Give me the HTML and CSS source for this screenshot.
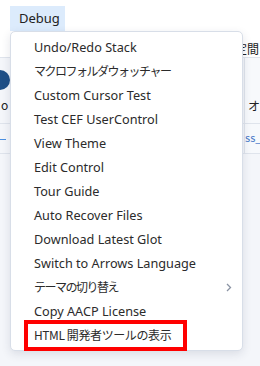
FILE: index.html
```html
<!doctype html>
<html lang="ja">
<head>
  <meta charset="UTF-8">
  <meta name="viewport" content="width=device-width, initial-scale=1.0">
  <title>Debug menu</title>
  <link rel="stylesheet" href="styles.css">
</head>
<body>

<div class="menubar">
  <div class="menubar-tab">Debug</div>
</div>

<div class="sheet">
  <div class="sheet-head">
    <span class="head-label">設定間</span>
  </div>
  <div class="sheet-row tall">
    <div class="cell-left">
      <span class="avatar"></span>
      <span class="avatar-chevron">›</span>
      <span class="cell-name">o</span>
    </div>
    <div class="cell-right">
      <span class="cell-kana">オ</span>
    </div>
  </div>
  <div class="sheet-row">
    <div class="cell-left">
      <span class="cell-dash"></span>
    </div>
    <div class="cell-right">
      <span class="cell-link">ss_</span>
    </div>
  </div>
  <div class="sheet-rest"></div>
</div>

<div class="dropdown">
  <ul class="dropdown-list">
    <li class="dropdown-item">Undo/Redo Stack</li>
    <li class="dropdown-item jp kana">マクロフォルダウォッチャー</li>
    <li class="dropdown-item">Custom Cursor Test</li>
    <li class="dropdown-item">Test CEF UserControl</li>
    <li class="dropdown-item">View Theme</li>
    <li class="dropdown-item">Edit Control</li>
    <li class="dropdown-item">Tour Guide</li>
    <li class="dropdown-item">Auto Recover Files</li>
    <li class="dropdown-item">Download Latest Glot</li>
    <li class="dropdown-item">Switch to Arrows Language</li>
    <li class="dropdown-item jp kana has-sub">
      テーマの切り替え
      <svg class="sub-arrow" width="6" height="9" viewBox="0 0 6 9">
        <path d="M1 1 L4.5 4.5 L1 8" fill="none" stroke="#8a93a3" stroke-width="1.3"/>
      </svg>
    </li>
    <li class="dropdown-item">Copy AACP License</li>
    <li class="dropdown-item jp tight">HTML 開発者ツールの表示</li>
  </ul>
</div>

<div class="highlight-box"></div>

</body>
</html>
```

FILE: styles.css
```css
body {
  margin: 0;
  background-color: #ffffff;
  font-family: 'Noto Sans', 'Noto Sans CJK JP', sans-serif;
  font-size: 12.7px;
  color: #2b2b2b;
  width: 260px;
  height: 366px;
  overflow: hidden;
  position: relative;
}

.menubar {
  height: 37px;
  padding: 6px 0 0 10px;
  box-sizing: border-box;
}

.menubar-tab {
  width: 55px;
  height: 25px;
  line-height: 24px;
  padding-left: 9px;
  box-sizing: border-box;
  background-color: #dcebfc;
  color: #222;
  font-size: 13px;
}

/* sheet behind the dropdown */
.sheet {
  font-family: 'Noto Sans CJK JP', sans-serif;
  font-size: 12px;
}

.sheet-head {
  height: 20px;
  display: flex;
  justify-content: flex-end;
  border-bottom: 1px solid #dfe4ec;
}

.head-label {
  margin-right: 1px;
  line-height: 24px;
  color: #222;
}

.sheet-row {
  height: 29px;
  display: flex;
  background-color: #f4f6fa;
  border-bottom: 1px solid #dfe4ec;
}

.sheet-row.tall {
  height: 65px;
}

.cell-left {
  width: 244px;
  position: relative;
  overflow: hidden;
}

.cell-right {
  flex: 1;
  border-left: 1px solid #dfe4ec;
  background-color: #f7f9fc;
  overflow: hidden;
  white-space: nowrap;
}

.avatar {
  display: block;
  width: 20px;
  height: 20px;
  border-radius: 50%;
  background-color: #1f4f86;
  margin: 12px 0 0 -10px;
}

.avatar-chevron {
  position: absolute;
  left: 12px;
  top: 12px;
  color: #9aa3b0;
  font-size: 11px;
}

.cell-name {
  display: block;
  margin: 6px 0 0 1px;
  color: #222;
}

.cell-kana {
  display: block;
  margin: 39px 0 0 3px;
  color: #222;
}

.cell-dash {
  display: block;
  width: 6px;
  height: 1px;
  margin: 15px 0 0 0;
  background-color: #4a90e2;
}

.cell-link {
  display: block;
  margin: 5px 0 0 0;
  color: #4a79c8;
  font-size: 11px;
}

.sheet-rest {
  height: 220px;
  background-color: #f4f6fa;
}

/* dropdown */
.dropdown {
  position: absolute;
  left: 10px;
  top: 31px;
  width: 233px;
  height: 320px;
  box-sizing: border-box;
  background-color: #ffffff;
  border: 1px solid #d8dee8;
  border-radius: 5px;
  box-shadow: 0 3px 10px rgba(30, 45, 70, 0.12);
}

.dropdown-list {
  list-style: none;
  margin: 0;
  padding: 3px 0 0 0;
}

.dropdown-item {
  height: 24px;
  line-height: 24px;
  padding-left: 23px;
  position: relative;
  white-space: nowrap;
}

.dropdown-item.jp {
  font-family: 'Noto Sans CJK JP', sans-serif;
  font-size: 12px;
}

.dropdown-item.kana {
  letter-spacing: -1.5px;
}

.dropdown-item.tight {
  letter-spacing: -0.4px;
}

.sub-arrow {
  position: absolute;
  right: 10px;
  top: 8px;
}

.highlight-box {
  position: absolute;
  left: 24px;
  top: 320px;
  width: 163px;
  height: 31px;
  box-sizing: border-box;
  border: 4px solid #ff0000;
}
```
